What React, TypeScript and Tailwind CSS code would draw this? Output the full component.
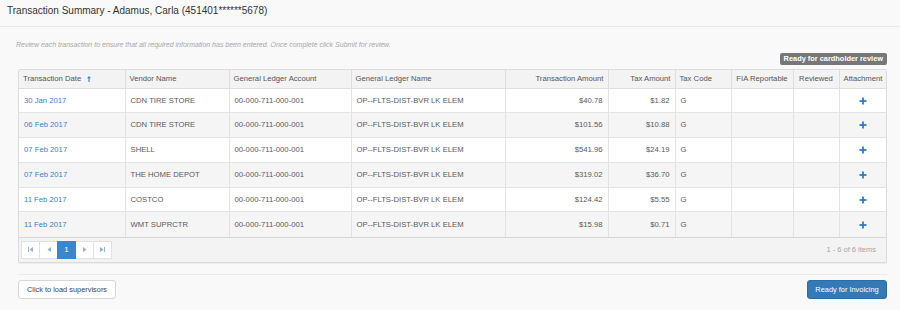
import type { ReactNode } from "react";

type Row = {
  date: string;
  vendor: string;
  account: string;
  ledger: string;
  amount: string;
  tax: string;
  code: string;
};

const rows: Row[] = [
  { date: "30 Jan 2017", vendor: "CDN TIRE STORE", account: "00-000-711-000-001", ledger: "OP--FLTS-DIST-BVR LK ELEM", amount: "$40.78", tax: "$1.82", code: "G" },
  { date: "06 Feb 2017", vendor: "CDN TIRE STORE", account: "00-000-711-000-001", ledger: "OP--FLTS-DIST-BVR LK ELEM", amount: "$101.56", tax: "$10.88", code: "G" },
  { date: "07 Feb 2017", vendor: "SHELL", account: "00-000-711-000-001", ledger: "OP--FLTS-DIST-BVR LK ELEM", amount: "$541.96", tax: "$24.19", code: "G" },
  { date: "07 Feb 2017", vendor: "THE HOME DEPOT", account: "00-000-711-000-001", ledger: "OP--FLTS-DIST-BVR LK ELEM", amount: "$319.02", tax: "$36.70", code: "G" },
  { date: "11 Feb 2017", vendor: "COSTCO", account: "00-000-711-000-001", ledger: "OP--FLTS-DIST-BVR LK ELEM", amount: "$124.42", tax: "$5.55", code: "G" },
  { date: "11 Feb 2017", vendor: "WMT SUPRCTR", account: "00-000-711-000-001", ledger: "OP--FLTS-DIST-BVR LK ELEM", amount: "$15.98", tax: "$0.71", code: "G" },
];

function PlusIcon() {
  return (
    <svg width="8" height="8" viewBox="0 0 8 8" className="inline-block">
      <line x1="4" y1="0.5" x2="4" y2="7.5" stroke="#2f7bc4" strokeWidth="1.8" />
      <line x1="0.5" y1="4" x2="7.5" y2="4" stroke="#2f7bc4" strokeWidth="1.8" />
    </svg>
  );
}

function PageButton({ children, active }: { children: ReactNode; active?: boolean }) {
  return (
    <div
      className={`w-[19px] h-[18px] flex items-center justify-center border -ml-px first:ml-0 ${
        active
          ? "bg-[#3c86cb] border-[#3c86cb] text-white text-[8px] relative"
          : "bg-white border-[#e1e1e1]"
      }`}
    >
      {children}
    </div>
  );
}

const th = "border border-[#dedede] px-[4px] font-normal text-[#555] h-[18px] whitespace-nowrap overflow-hidden";
const td = "border border-[#e3e3e3] px-[5px] h-[24.8px] whitespace-nowrap overflow-hidden";

export default function App() {
  return (
    <div className="w-[900px] h-[310px] bg-[#f9f9f9] font-['Liberation_Sans',Arial,sans-serif] overflow-hidden">
      {/* Header */}
      <div className="h-[27px] border-b border-[#e8e8e8] pl-[7px] pt-[4px]">
        <h1 className="text-[10px] leading-[14px] text-[#333]">
          Transaction Summary - Adamus, Carla (451401******5678)
        </h1>
      </div>

      <div className="pl-[18px] pr-[13px]">
        <p className="mt-[13px] -ml-[2px] text-[7px] leading-[9px] italic text-[#a8a8a8]">
          Review each transaction to ensure that all required information has been entered. Once complete click Submit for review.
        </p>

        <div className="mt-[4px] flex justify-end">
          <span className="h-[12px] px-[4px] rounded-[2px] bg-[#777] text-white font-bold text-[7.4px] leading-[12px]">
            Ready for cardholder review
          </span>
        </div>

        {/* Grid */}
        <div className="mt-[4px] border border-[#dcdcdc] rounded-[2px] shadow-[0_1px_1px_rgba(0,0,0,0.06)] bg-white">
          <table className="w-full table-fixed border-collapse text-[7.7px] text-[#5a5a5a] border-hidden">
            <colgroup>
              <col className="w-[106px]" />
              <col className="w-[104px]" />
              <col className="w-[122px]" />
              <col className="w-[154px]" />
              <col className="w-[103px]" />
              <col className="w-[67px]" />
              <col className="w-[56px]" />
              <col className="w-[62px]" />
              <col className="w-[46px]" />
              <col />
            </colgroup>
            <thead>
              <tr className="bg-[#f3f3f3]">
                <th className={`${th} text-left`}>
                  <span className="inline-flex items-center gap-[6px]">
                    Transaction Date
                    <svg width="4" height="6" viewBox="0 0 4 6">
                      <path d="M2 0 L4 2.2 H2.6 V6 H1.4 V2.2 H0 Z" fill="#3c86cb" />
                    </svg>
                  </span>
                </th>
                <th className={`${th} text-left`}>Vendor Name</th>
                <th className={`${th} text-left`}>General Ledger Account</th>
                <th className={`${th} text-left`}>General Ledger Name</th>
                <th className={`${th} text-right`}>Transaction Amount</th>
                <th className={`${th} text-right`}>Tax Amount</th>
                <th className={`${th} text-left`}>Tax Code</th>
                <th className={`${th} text-center`}>FIA Reportable</th>
                <th className={`${th} text-center`}>Reviewed</th>
                <th className={`${th} text-center`}>Attachment</th>
              </tr>
            </thead>
            <tbody>
              {rows.map((r, i) => (
                <tr key={i} className={i % 2 === 1 ? "bg-[#f5f5f5]" : "bg-white"}>
                  <td className={`${td} text-[#3a7fc1]`}>{r.date}</td>
                  <td className={td}>{r.vendor}</td>
                  <td className={td}>{r.account}</td>
                  <td className={td}>{r.ledger}</td>
                  <td className={`${td} text-right`}>{r.amount}</td>
                  <td className={`${td} text-right`}>{r.tax}</td>
                  <td className={td}>{r.code}</td>
                  <td className={td}></td>
                  <td className={td}></td>
                  <td className={`${td} text-center`}>
                    <PlusIcon />
                  </td>
                </tr>
              ))}
            </tbody>
          </table>

          {/* Pager */}
          <div className="h-[25px] border-t border-[#d6d6d6] bg-[#f3f3f3] flex items-center justify-between pl-[2px] pr-[10px]">
            <div className="flex">
              <PageButton>
                <svg width="5" height="5" viewBox="0 0 5 5">
                  <rect x="0" y="0" width="1" height="5" fill="#8fb2d6" />
                  <path d="M5 0 L1.5 2.5 L5 5 Z" fill="#8fb2d6" />
                </svg>
              </PageButton>
              <PageButton>
                <svg width="4" height="5" viewBox="0 0 4 5">
                  <path d="M4 0 L0.5 2.5 L4 5 Z" fill="#8fb2d6" />
                </svg>
              </PageButton>
              <PageButton active>1</PageButton>
              <PageButton>
                <svg width="4" height="5" viewBox="0 0 4 5">
                  <path d="M0 0 L3.5 2.5 L0 5 Z" fill="#8fb2d6" />
                </svg>
              </PageButton>
              <PageButton>
                <svg width="5" height="5" viewBox="0 0 5 5">
                  <path d="M0 0 L3.5 2.5 L0 5 Z" fill="#8fb2d6" />
                  <rect x="4" y="0" width="1" height="5" fill="#8fb2d6" />
                </svg>
              </PageButton>
            </div>
            <span className="text-[7.5px] text-[#a5a5a5]">1 - 6 of 6 items</span>
          </div>
        </div>

        <div className="mt-[11px] border-t border-[#ececec]" />

        <div className="mt-[5px] flex justify-between">
          <button className="h-[19px] w-[98px] bg-white border border-[#d6d6d6] rounded-[3px] text-[7.4px] text-[#444]">
            Click to load supervisors
          </button>
          <button className="h-[19px] w-[80px] bg-[#337ab7] border border-[#2e6da4] rounded-[3px] text-[7.4px] text-white">
            Ready for Invoicing
          </button>
        </div>
      </div>
    </div>
  );
}
